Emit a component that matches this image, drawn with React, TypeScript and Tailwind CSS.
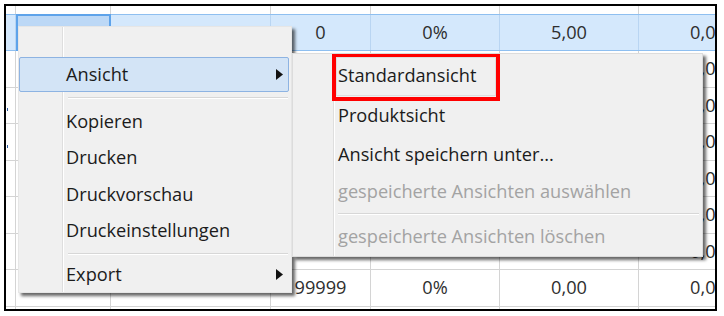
import React from "react";

const colW = ["w-[10px]", "w-[95px]", "w-[160px]", "w-[100px]", "w-[129px]", "w-[139px]", "w-[139px]"];

type Row = { h: string; cells: string[]; mark?: boolean };

const rows: Row[] = [
  { h: "h-[37px]", cells: ["", "", "", "0", "0%", "0,00", "0,00"] },
  { h: "h-[36px]", cells: ["", "", "", "0", "0%", "0,00", "0,00"], mark: true },
  { h: "h-[37px]", cells: ["", "", "", "0", "0%", "0,00", "0,00"], mark: true },
  { h: "h-[36px]", cells: ["", "", "", "0", "0%", "0,00", "0,00"] },
  { h: "h-[37px]", cells: ["", "", "", "0", "0%", "0,00", "0,00"] },
  { h: "h-[36px]", cells: ["", "", "", "", "", "", "0,00"] },
  { h: "h-[37px]", cells: ["", "", "", "99999", "0%", "0,00", "0,00"] },
  { h: "h-[37px]", cells: ["", "", "", "", "", "", ""] },
];

function Arrow() {
  return (
    <svg width="7" height="11" viewBox="0 0 7 11">
      <polygon points="0,0 7,5.5 0,11" fill="#111" />
    </svg>
  );
}

function MenuItem({ label, arrow, h }: { label: string; arrow?: boolean; h: string }) {
  return (
    <div className={`${h} mr-[2px] pl-[47px] pr-[6px] flex items-center justify-between`}>
      <span>{label}</span>
      {arrow && <Arrow />}
    </div>
  );
}

function Sep({ h }: { h: string }) {
  return (
    <div className={`${h} flex items-center ml-[49px] mr-[3px]`}>
      <div className="w-full h-[2px] border-t border-[#d7d7d7] border-b border-b-white" />
    </div>
  );
}

function SubItem({ label, h, disabled }: { label: string; h: string; disabled?: boolean }) {
  return (
    <div className={`${h} pl-[45px] flex items-center ${disabled ? "text-[#a3a3a3]" : "text-[#1b1b1b]"}`}>
      {label}
    </div>
  );
}

export default function App() {
  return (
    <div className="relative w-[724px] h-[316px] bg-white overflow-hidden font-['Open_Sans',sans-serif] text-[18.2px]">
      {/* grid behind */}
      <div className="ml-[4px] mt-[4px] w-[713px] h-[307px] border-2 border-black overflow-hidden text-[#2e2e2e]">
        <div className="flex h-[8px]">
          {colW.map((w, i) => (
            <div key={i} className={`${w} shrink-0 border-r border-[#d4d4d4]`} />
          ))}
        </div>
        <div className="flex h-[37px] bg-[#d4e8fc] border-y border-[#8ebff0]">
          {colW.map((w, i) => (
            <div
              key={i}
              className={`${w} shrink-0 flex items-center justify-center ${
                i === 1
                  ? "border-2 border-[#5ea3ea] bg-[#bcd8f6] -my-[1px]"
                  : "border-r border-[#b9d5f2]"
              }`}
            >
              {["", "", "", "0", "0%", "5,00", "0,00"][i]}
            </div>
          ))}
        </div>
        {rows.map((r, ri) => (
          <div key={ri} className={`flex ${r.h} border-b border-[#d4d4d4]`}>
            {colW.map((w, i) => (
              <div key={i} className={`${w} shrink-0 flex items-center justify-center border-r border-[#d4d4d4]`}>
                {i === 0 && r.mark ? <div className="w-[1px] h-[3px] bg-[#2c5aa0] mt-[8px] -ml-[6px]" /> : r.cells[i]}
              </div>
            ))}
          </div>
        ))}
      </div>

      {/* context menu */}
      <div className="absolute left-[18px] top-[26px] w-[274px] h-[267px] border border-[#e6e6e6] bg-[linear-gradient(to_right,#f0f0f0_43px,#dedede_43px,#dedede_44px,#ffffff_44px,#ffffff_45px,#f0f0f0_45px)] shadow-[3px_3px_3px_rgba(0,0,0,0.6)] text-[#1b1b1b] pt-[30px]">
        <div className="h-[35px] mr-[2px] pl-[46px] pr-[5px] flex items-center justify-between bg-[#d3e4f6] border border-[#8db3e2] rounded-[2px]">
          <span>Ansicht</span>
          <Arrow />
        </div>
        <Sep h="h-[11px]" />
        <MenuItem h="h-[37px]" label="Kopieren" />
        <MenuItem h="h-[36px]" label="Drucken" />
        <MenuItem h="h-[37px]" label="Druckvorschau" />
        <MenuItem h="h-[36px]" label="Druckeinstellungen" />
        <Sep h="h-[9px]" />
        <MenuItem h="h-[33px]" label="Export" arrow />
      </div>

      {/* submenu */}
      <div className="absolute left-[292px] top-[53px] w-[411px] h-[204px] border border-[#dcdcdc] bg-[linear-gradient(to_right,#f0f0f0_40px,#dedede_40px,#dedede_41px,#ffffff_41px,#ffffff_42px,#f0f0f0_42px)] shadow-[3px_3px_3px_rgba(0,0,0,0.6)] pt-[2px]">
        <SubItem h="h-[40px]" label="Standardansicht" />
        <SubItem h="h-[39px]" label="Produktsicht" />
        <SubItem h="h-[39px]" label="Ansicht speichern unter..." />
        <SubItem h="h-[36px]" label="gespeicherte Ansichten auswählen" disabled />
        <div className="h-[8px] flex items-center ml-[45px] mr-[3px]">
          <div className="w-full h-[2px] border-t border-[#d7d7d7] border-b border-b-white" />
        </div>
        <SubItem h="h-[38px]" label="gespeicherte Ansichten löschen" disabled />
      </div>

      {/* annotation */}
      <div className="absolute left-[332px] top-[54px] w-[168px] h-[47px] border-4 border-[#ff0000]">
        <div className="w-full h-full border border-[#dedede] -mt-[1px]" />
      </div>
    </div>
  );
}
